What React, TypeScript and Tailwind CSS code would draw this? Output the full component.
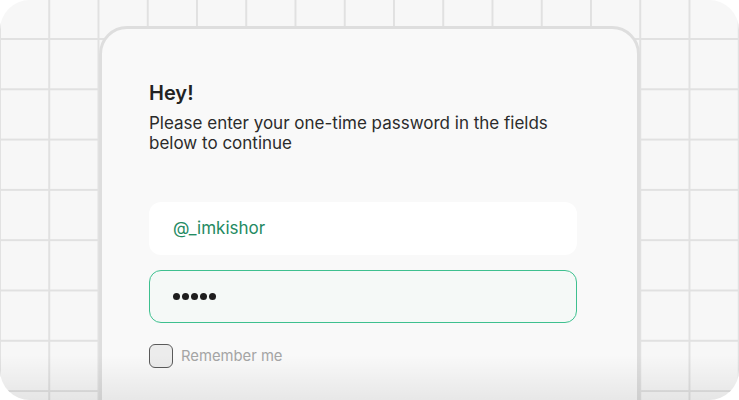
export default function App() {
  return (
    <div className="w-[739px] h-[400px] bg-white">
      <div
        className="relative w-[739px] h-[400px] overflow-hidden rounded-[30px] bg-[#f7f7f7] pl-[99px] pt-[26px] bg-[linear-gradient(to_right,#e1e1e1_2px,transparent_2px),linear-gradient(to_bottom,#e1e1e1_2px,transparent_2px)] bg-[size:49.25px_50.3px] bg-[position:-1px_38px]"
        style={{ fontFamily: 'Inter, "Noto Sans", sans-serif' }}
      >
        <div className="w-[541px] h-[420px] rounded-[28px] border-[3px] border-[#dedede] bg-[#f9f9f9] pl-[47px] pt-[52px]">
          <h1 className="text-[20px] font-semibold leading-[24px] text-[#232323]">Hey!</h1>
          <p className="mt-[9px] w-[430px] text-[17px] leading-[19.5px] text-[#2b2b2b]">
            Please enter your one-time password in the fields below to continue
          </p>
          <div className="mt-[49px] flex h-[53px] w-[428px] items-center rounded-[12px] bg-white pl-[24px] text-[17px] text-[#248a62]">
            @_imkishor
          </div>
          <div className="mt-[15px] flex h-[53px] w-[428px] items-center gap-[2.5px] rounded-[12px] border-[1.5px] border-[#3ec08f] bg-[#f5f9f7] pl-[23px]">
            {[0, 1, 2, 3, 4].map((i) => (
              <span key={i} className="h-[6.5px] w-[6.5px] rounded-full bg-[#1e1e1e]" />
            ))}
          </div>
          <label className="mt-[21px] flex items-center gap-[8px]">
            <span className="h-[24px] w-[24px] rounded-[6px] border-[1.5px] border-[#5a5a5a] bg-[#ececec]" />
            <span className="text-[14.8px] text-[#a5a5a5]">Remember me</span>
          </label>
        </div>
        <div className="pointer-events-none absolute bottom-0 left-0 h-[45px] w-full bg-gradient-to-b from-transparent to-[rgba(0,0,0,0.07)]" />
      </div>
    </div>
  );
}
